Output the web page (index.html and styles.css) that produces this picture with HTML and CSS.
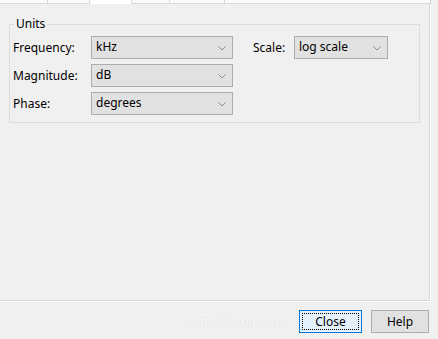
FILE: index.html
```html
<!DOCTYPE html>
<html lang="en">
<head>
  <meta charset="UTF-8" />
  <title>Units</title>
  <link rel="stylesheet" href="styles.css">
</head>
<body>
  <div class="dialog">
    <div class="tabs">
      <span class="tab" style="width:47px"></span>
      <span class="tab" style="width:41px"></span>
      <span class="tab active" style="width:41px"></span>
      <span class="tab" style="width:37px"></span>
      <span class="tab" style="width:54px"></span>
      <span class="tab rest"></span>
    </div>

    <div class="page">
      <fieldset class="group">
        <legend>Units</legend>
        <div class="row">
          <label class="lbl">Frequency:</label>
          <div class="combo wide">kHz<svg class="chev" width="8" height="5" viewBox="0 0 8 5"><polyline points="0.5,0.5 4,4 7.5,0.5" /></svg></div>
          <label class="lbl scale-lbl">Scale:</label>
          <div class="combo narrow">log scale<svg class="chev" width="8" height="5" viewBox="0 0 8 5"><polyline points="0.5,0.5 4,4 7.5,0.5" /></svg></div>
        </div>
        <div class="row">
          <label class="lbl">Magnitude:</label>
          <div class="combo wide">dB<svg class="chev" width="8" height="5" viewBox="0 0 8 5"><polyline points="0.5,0.5 4,4 7.5,0.5" /></svg></div>
        </div>
        <div class="row">
          <label class="lbl">Phase:</label>
          <div class="combo wide">degrees<svg class="chev" width="8" height="5" viewBox="0 0 8 5"><polyline points="0.5,0.5 4,4 7.5,0.5" /></svg></div>
        </div>
      </fieldset>
    </div>

    <div class="footer">
      <span class="watermark">https://blog.csdn</span>
      <button class="btn close">Close</button>
      <button class="btn help">Help</button>
    </div>
  </div>
</body>
</html>
```

FILE: styles.css
```css
html, body {
  margin: 0;
  padding: 0;
}
body {
  background: #f0f0f0;
  color: #000;
  font-family: "Noto Sans", "Open Sans", Arial, sans-serif;
  font-size: 12px;
}
.dialog {
  width: 438px;
  height: 339px;
  display: flex;
  flex-direction: column;
  overflow: hidden;
}
.tabs {
  display: flex;
  height: 3px;
  width: 431px;
  background: #fbfbfb;
  border-bottom: 1px solid #d9d9d9;
}
.tab {
  display: block;
  height: 3px;
  border-right: 1px solid #d9d9d9;
}
.tab.active {
  background: #fff;
  height: 4px;
  margin-bottom: -1px;
}
.tab.rest {
  flex: 1;
}
.page {
  width: 430px;
  height: 297px;
  border-right: 1px solid #d9d9d9;
  border-bottom: 1px solid #d9d9d9;
  box-shadow: 1px 1px 0 #fff;
  padding: 12px 0 0 9px;
  box-sizing: border-box;
}
.group {
  width: 411px;
  margin: 0;
  padding: 3px 0 7px 3px;
  border: 1px solid #dcdcdc;
  box-sizing: border-box;
}
.group legend {
  padding: 0 2px;
  margin-left: 1px;
  line-height: 16px;
}
.row {
  display: flex;
  align-items: center;
  height: 23px;
  margin-top: 5px;
}
.row:first-of-type {
  margin-top: 1px;
}
.lbl {
  width: 78px;
  white-space: nowrap;
}
.scale-lbl {
  width: 41px;
  margin-left: 20px;
}
.combo {
  position: relative;
  height: 23px;
  box-sizing: border-box;
  border: 1px solid #adadad;
  background: #e1e1e1;
  padding-left: 4px;
  line-height: 20px;
}
.combo.wide { width: 142px; }
.combo.narrow { width: 94px; }
.chev {
  position: absolute;
  right: 6px;
  top: 9px;
  fill: none;
  stroke: #8a8a8a;
  stroke-width: 1;
}
.footer {
  display: flex;
  align-items: center;
  gap: 9px;
  padding: 9px 0 0 187px;
}
.watermark {
  flex: 0 0 103px;
  font-size: 12.5px;
  color: #fafafa;
  text-shadow: 0 0 1px rgba(160, 160, 160, 0.4);
  white-space: nowrap;
}
.btn {
  flex: none;
  height: 23px;
  box-sizing: border-box;
  font-family: inherit;
  font-size: 12px;
  color: #000;
  padding: 0;
  background: #e1e1e1;
  border: 1px solid #adadad;
}
.btn.close {
  width: 63px;
  background: #e5f1fb;
  border-color: #0078d7;
  outline: 1px dotted #000;
  outline-offset: -4px;
}
.btn.help {
  width: 58px;
}
```
